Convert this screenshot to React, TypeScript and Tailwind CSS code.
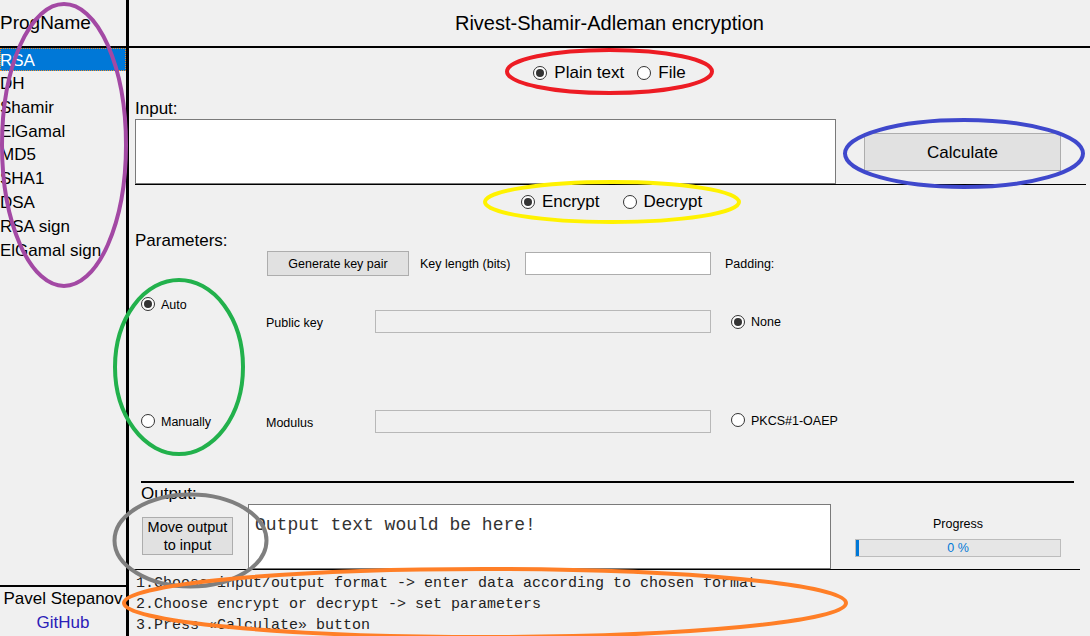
import React from 'react';

const sans = "font-['Liberation_Sans',Arial,sans-serif]";
const mono = "font-['Liberation_Mono','Courier_New',monospace]";

const programs = ['RSA', 'DH', 'Shamir', 'ElGamal', 'MD5', 'SHA1', 'DSA', 'RSA sign', 'ElGamal sign'];

function Radio(props: { checked?: boolean }) {
  return (
    <span className="inline-flex h-[14px] w-[14px] shrink-0 items-center justify-center rounded-full border border-[#333] bg-white">
      {props.checked ? <span className="h-[8px] w-[8px] rounded-full bg-[#333]" /> : null}
    </span>
  );
}

function RadioLabel(props: { label: string; checked?: boolean; small?: boolean }) {
  return (
    <span className={`inline-flex items-center ${props.small ? 'gap-[6px] text-[12.5px]' : 'gap-[7px] text-[17px]'}`}>
      <Radio checked={props.checked} />
      <span className={props.small ? 'pt-[2px]' : ''}>{props.label}</span>
    </span>
  );
}

// coloured annotation rings drawn over the window
function Annotations() {
  const rings = [
    { cx: 64, cy: 145, rx: 62, ry: 141, c: '#a349a4' },
    { cx: 609.5, cy: 71.5, rx: 102.5, ry: 21.5, c: '#ed1c24' },
    { cx: 964, cy: 153.5, rx: 119, ry: 33.5, c: '#3f48cc' },
    { cx: 612, cy: 202, rx: 127, ry: 20, c: '#fff200' },
    { cx: 179, cy: 367, rx: 64, ry: 87, c: '#22b14c' },
    { cx: 190.5, cy: 540.5, rx: 76, ry: 46, c: '#7f7f7f' },
    { cx: 485, cy: 603, rx: 361, ry: 34, c: '#ff7f27' }
  ];
  return (
    <svg className="pointer-events-none absolute left-0 top-0" width={1090} height={636}>
      {rings.map((r) => (
        <ellipse key={r.c} cx={r.cx} cy={r.cy} rx={r.rx} ry={r.ry} fill="none" stroke={r.c} strokeWidth={4} />
      ))}
    </svg>
  );
}

export default function App() {
  return (
    <div className={`relative flex h-[636px] w-[1090px] overflow-hidden bg-[#f0f0f0] text-black ${sans}`}>
      {/* left list of programs */}
      <div className="flex w-[129px] shrink-0 flex-col border-r-[3px] border-black">
        <div className="flex h-[46px] shrink-0 items-center text-[19px]">ProgName</div>
        <div className="h-[2px] shrink-0 bg-black" />
        <div className="flex-1">
          {programs.map((p, i) => (
            <div
              key={p}
              className={
                i === 0
                  ? 'h-[23px] bg-[#0078d7] pt-[1px] text-[17px] leading-[24px] text-white outline-1 outline-dotted outline-[#f08a24] -outline-offset-1'
                  : 'h-[23.8px] pt-[1px] text-[17px] leading-[24px]'
              }
            >
              {p}
            </div>
          ))}
        </div>
        <div className="h-[2px] shrink-0 bg-black" />
        <div className="text-center text-[17px] leading-[24px]">Pavel Stepanov</div>
        <div className="h-[25px] text-center text-[17px] leading-[24px] text-[#2b20b8]">GitHub</div>
      </div>

      {/* main panel */}
      <div className="flex flex-1 flex-col">
        <div className="flex h-[46px] shrink-0 items-center justify-center text-[20px]">Rivest-Shamir-Adleman encryption</div>
        <div className="h-[2px] shrink-0 bg-black" />

        <div className="flex h-[50px] shrink-0 items-center justify-center gap-[13px]">
          <RadioLabel label="Plain text" checked />
          <RadioLabel label="File" />
        </div>

        <div className="pl-[6px]">
          <div className="h-[21px] text-[17px] leading-[21px]">Input:</div>
          <div className="flex items-center">
            <div className="h-[65px] w-[701px] border border-[#7a7a7a] bg-white" />
            <button type="button" className="ml-[28px] h-[38px] w-[197px] border border-[#adadad] bg-[#e1e1e1] pt-[2px] text-[17px]">
              Calculate
            </button>
          </div>
          <div className="h-px w-[951px] bg-black" />
        </div>

        <div className="flex h-[33px] shrink-0 items-center justify-center gap-[23px] pl-[4px]">
          <RadioLabel label="Encrypt" checked />
          <RadioLabel label="Decrypt" />
        </div>

        {/* parameters */}
        <div className="pl-[6px]">
          <div className="mt-[13px] h-[20px] text-[17px] leading-[20px]">Parameters:</div>
          <div className="flex text-[12.5px]">
            <div className="flex w-[131px] flex-col pl-[6px]">
              <div className="mt-[46px] flex h-[14px] items-center">
                <RadioLabel label="Auto" checked small />
              </div>
              <div className="mt-[103px] flex h-[14px] items-center">
                <RadioLabel label="Manually" small />
              </div>
            </div>
            <div className="flex flex-col">
              <div className="flex h-[25px] items-center">
                <button type="button" className="ml-[1px] h-[25px] w-[142px] border border-[#adadad] bg-[#e1e1e1] pt-[1px]">
                  Generate key pair
                </button>
                <span className="ml-[11px] w-[105px] pt-[2px]">Key length (bits)</span>
                <div className="h-[23px] w-[186px] border border-[#adadad] bg-white" />
                <span className="ml-[14px] pt-[2px]">Padding:</span>
              </div>
              <div className="mt-[34px] flex h-[23px] items-center">
                <span className="w-[109px] pt-[4px]">Public key</span>
                <div className="h-[23px] w-[336px] border border-[#b8b8b8] bg-[#f0f0f0]" />
                <span className="ml-[20px]">
                  <RadioLabel label="None" checked small />
                </span>
              </div>
              <div className="mt-[77px] flex h-[23px] items-center">
                <span className="w-[109px] pt-[3px]">Modulus</span>
                <div className="h-[23px] w-[336px] border border-[#b8b8b8] bg-[#f0f0f0]" />
                <span className="ml-[20px]">
                  <RadioLabel label="PKCS#1-OAEP" small />
                </span>
              </div>
            </div>
          </div>
        </div>

        {/* output */}
        <div className="pl-[12px]">
          <div className="mt-[48px] h-[2px] w-[933px] bg-black" />
          <div className="flex">
            <div className="flex w-[107px] flex-col">
              <div className="mt-[1px] h-[19px] text-[17px] leading-[19px]">Output:</div>
              <button
                type="button"
                className="ml-[1px] mt-[14px] h-[38px] w-[91px] border border-[#adadad] bg-[#e1e1e1] text-[14.5px] leading-[18px]"
              >
                Move output
                <br />
                to input
              </button>
            </div>
            <div className={`mt-[21px] h-[65px] w-[583px] border border-[#7a7a7a] bg-white pl-[6px] pt-[9px] text-[18px] leading-[22px] text-[#333] ${mono}`}>
              Output text would be here!
            </div>
            <div className="ml-[24px] flex w-[206px] flex-col">
              <div className="mt-[34px] h-[14px] text-center text-[12.5px] leading-[14px]">Progress</div>
              <div className="relative mt-[8px] flex h-[18px] items-center justify-center border border-[#bcbcbc] bg-[#e6e6e6] text-[12.5px] text-[#0078d7]">
                <span className="absolute left-0 top-0 h-full w-[3px] bg-[#0078d7]" />
                0 %
              </div>
            </div>
          </div>
        </div>
        <div className="h-px w-[951px] shrink-0 bg-black" />

        <div className={`pl-[7px] pt-[3px] text-[15px] leading-[21px] text-[#222] ${mono}`}>
          <div className="whitespace-pre">1.Choose input/output format -&gt; enter data according to chosen format</div>
          <div className="whitespace-pre">2.Choose encrypt or decrypt -&gt; set parameters</div>
          <div className="whitespace-pre">3.Press «Calculate» button</div>
        </div>
      </div>

      <Annotations />
    </div>
  );
}
